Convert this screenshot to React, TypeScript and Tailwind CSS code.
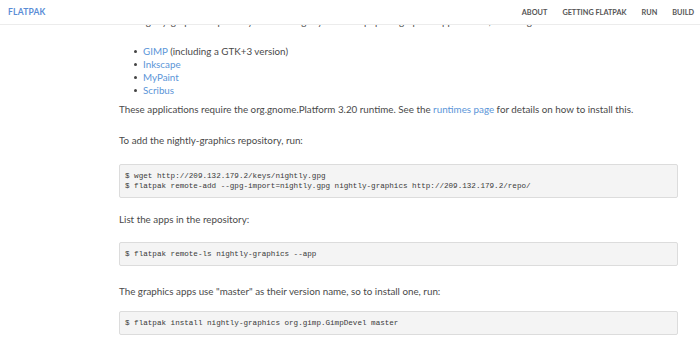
import React from "react";

const navItems = ["About", "Getting Flatpak", "Run", "Build"];

const apps = [
  { name: "GIMP", note: " (including a GTK+3 version)" },
  { name: "Inkscape", note: "" },
  { name: "MyPaint", note: "" },
  { name: "Scribus", note: "" },
];

function Code({ lines }: { lines: string[] }) {
  return (
    <pre className="rounded-[2px] border border-[#dcdcdc] bg-[#f4f4f4] px-[5px] py-[6px] font-['Liberation_Mono',monospace] text-[7.6px] leading-[10px] text-[#3a3a3a]">
      {lines.map((l) => (
        <div key={l}>{l}</div>
      ))}
    </pre>
  );
}

export default function App() {
  return (
    <div className="relative h-[349px] w-[700px] overflow-hidden bg-white font-['Lato',sans-serif] text-[9.8px] leading-[13px] text-[#4a4a4a]">
      {/* fixed top bar, sits over the scrolled page */}
      <header className="absolute inset-x-0 top-0 z-10 flex h-[25px] items-center justify-between border-b border-[#ececec] bg-white pl-[8px] pr-[6px]">
        <a className="text-[8.5px] font-bold tracking-[0.2px] text-[#5b8dd6]">FLATPAK</a>
        <nav className="flex gap-[15px] text-[7.3px] font-bold uppercase text-[#555]">
          {navItems.map((n) => (
            <a key={n}>{n}</a>
          ))}
        </nav>
      </header>

      <main className="ml-[119px] w-[559px] pt-[15px]">
        <p>
          The nightly-graphics repository contains nightly builds of popular graphics applications, including:
        </p>

        <ul className="mt-[17px] pl-[24px]">
          {apps.map((a) => (
            <li key={a.name} className="relative">
              <span className="absolute left-[-9px] top-[5px] h-[3px] w-[3px] rounded-full bg-[#444]" />
              <a className="text-[#5b95d8]">{a.name}</a>
              {a.note}
            </li>
          ))}
        </ul>

        <p className="mt-[6px]">
          These applications require the org.gnome.Platform 3.20 runtime. See the{" "}
          <a className="text-[#5b95d8]">runtimes page</a> for details on how to install this.
        </p>

        <p className="mt-[18px]">To add the nightly-graphics repository, run:</p>

        <div className="mt-[16.5px]">
          <Code
            lines={[
              "$ wget http://209.132.179.2/keys/nightly.gpg",
              "$ flatpak remote-add --gpg-import=nightly.gpg nightly-graphics http://209.132.179.2/repo/",
            ]}
          />
        </div>

        <p className="mt-[15px]">List the apps in the repository:</p>

        <div className="mt-[16px]">
          <Code lines={["$ flatpak remote-ls nightly-graphics --app"]} />
        </div>

        <p className="mt-[19px]">The graphics apps use "master" as their version name, so to install one, run:</p>

        <div className="mt-[13.5px]">
          <Code lines={["$ flatpak install nightly-graphics org.gimp.GimpDevel master"]} />
        </div>
      </main>
    </div>
  );
}
